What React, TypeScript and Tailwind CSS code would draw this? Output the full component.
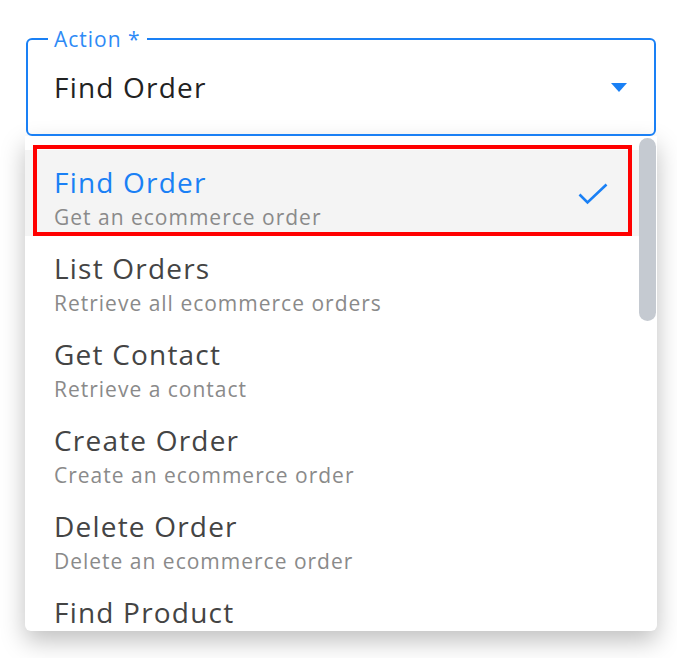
import React from "react";

const actions = [
  { title: "Find Order", sub: "Get an ecommerce order" },
  { title: "List Orders", sub: "Retrieve all ecommerce orders" },
  { title: "Get Contact", sub: "Retrieve a contact" },
  { title: "Create Order", sub: "Create an ecommerce order" },
  { title: "Delete Order", sub: "Delete an ecommerce order" },
  { title: "Find Product", sub: "" },
];

const App = () => {
  const selected = 0;
  return (
    <div
      className="w-[677px] h-[658px] bg-white pt-[38px]"
      style={{ fontFamily: '"Open Sans", sans-serif' }}
    >
      <div className="relative ml-[26px] w-[630px] h-[98px] border-2 border-[#1a80f5] rounded-[6px] flex items-center justify-between pl-[26px] pr-[27px]">
        <span className="absolute left-[20px] -top-[13px] px-[6px] bg-white text-[21px] leading-[24px] tracking-[1px] text-[#2e8af6]">
          Action *
        </span>
        <span className="text-[28px] leading-[36px] tracking-[1.2px] text-[#222222]">Find Order</span>
        <svg width="16" height="9" viewBox="0 0 16 9">
          <path d="M0 0h16L8 9z" fill="#1a80f5" />
        </svg>
      </div>
      <div className="ml-[25px] w-[632px] h-[495px] bg-white rounded-b-[6px] shadow-[0_10px_24px_rgba(0,0,0,0.25)] overflow-hidden flex">
        <div className="flex-1 pt-[14px]">
          {actions.map((a, i) => (
            <div
              key={a.title}
              className={
                "relative h-[86px] pl-[29px] pr-[31px] pt-[12px] flex items-start justify-between " +
                (i === selected ? "bg-[#f4f4f4]" : "")
              }
            >
              <div className="flex flex-col">
                <span
                  className={
                    "text-[28px] leading-[40px] tracking-[1.2px] " +
                    (i === selected ? "text-[#1a80f5]" : "text-[#444444]")
                  }
                >
                  {a.title}
                </span>
                {a.sub && (
                  <span className="mt-[2px] text-[21px] leading-[26px] tracking-[1px] text-[#8a8a8a]">
                    {a.sub}
                  </span>
                )}
              </div>
              {i === selected && (
                <svg width="30" height="22" viewBox="0 0 30 22" className="mt-[21px]">
                  <path
                    d="M1.5 11.5l8 8L28.5 1.5"
                    fill="none"
                    stroke="#1a80f5"
                    strokeWidth="2.6"
                  />
                </svg>
              )}
              {i === selected && (
                <div className="absolute left-[8px] right-[7px] -top-[5px] bottom-0 border-4 border-[#ff0000]" />
              )}
            </div>
          ))}
        </div>
        <div className="w-[18px] pt-[2px] pr-[1px]">
          <div className="h-[183px] rounded-full bg-[#c5cad1]" />
        </div>
      </div>
    </div>
  );
};

export default App;
